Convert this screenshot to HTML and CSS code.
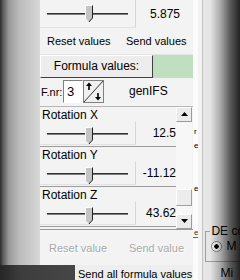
FILE: index.html
```html
<!DOCTYPE html>
<html lang="en">
  <head>
    <meta charset="UTF-8" />
    <title>Formula values</title>
    <link rel="stylesheet" href="styles.css">
  </head>
  <body>
    <div class="screen">
      <div class="leftcol">
        <div class="main">
          <div class="shade"></div>
          <div class="panel">
            <!-- top slider, half scrolled away -->
            <div class="row-top">
              <div class="slider tall">
                <div class="track"></div>
                <svg class="thumb" width="9" height="18" viewBox="0 0 9 18">
                  <path d="M0.5,0.5 H7.5 V13 L4,17 L0.5,13 Z" fill="#c4c4c4" />
                  <path d="M0.5,13 V0.5 H7.5" fill="none" stroke="#fff" />
                  <path d="M7.5,0.5 V13 L4,17" fill="none" stroke="#222" />
                </svg>
              </div>
              <span class="topval">5.875</span>
            </div>

            <div class="links">
              <span class="l1">Reset values</span>
              <span class="l2">Send values</span>
            </div>

            <div class="formula">
              <div class="fbutton">Formula values:</div>
              <div class="green"></div>
            </div>

            <div class="fnr">
              <span class="fnr-label">F.nr:</span>
              <span class="numbox">3</span>
              <svg class="spin" width="21" height="23" viewBox="0 0 21 23">
                <rect x="0.5" y="0.5" width="20" height="22" fill="#f0f0f0" stroke="#808080" />
                <path d="M1,22 L20,1" stroke="#333" />
                <path d="M6,10 V4" stroke="#000" stroke-width="1.6" />
                <path d="M3,6 L6,2.5 L9,6 Z" fill="#000" />
                <path d="M15,13 V19" stroke="#000" stroke-width="1.6" />
                <path d="M12,17 L15,20.5 L18,17 Z" fill="#000" />
              </svg>
              <span class="gen">genIFS</span>
            </div>

            <div class="scroll">
              <div class="rows">
                <div class="rot">
                  <div class="rot-label">Rotation X</div>
                  <div class="rot-line">
                    <div class="slider">
                      <div class="track"></div>
                      <svg class="thumb" width="9" height="18" viewBox="0 0 9 18">
                        <path d="M0.5,0.5 H7.5 V13 L4,17 L0.5,13 Z" fill="#c4c4c4" />
                        <path d="M0.5,13 V0.5 H7.5" fill="none" stroke="#fff" />
                        <path d="M7.5,0.5 V13 L4,17" fill="none" stroke="#222" />
                      </svg>
                    </div>
                    <span class="val">12.5</span>
                  </div>
                </div>
                <div class="rot">
                  <div class="rot-label">Rotation Y</div>
                  <div class="rot-line">
                    <div class="slider">
                      <div class="track"></div>
                      <svg class="thumb" width="9" height="18" viewBox="0 0 9 18">
                        <path d="M0.5,0.5 H7.5 V13 L4,17 L0.5,13 Z" fill="#c4c4c4" />
                        <path d="M0.5,13 V0.5 H7.5" fill="none" stroke="#fff" />
                        <path d="M7.5,0.5 V13 L4,17" fill="none" stroke="#222" />
                      </svg>
                    </div>
                    <span class="val">-11.12</span>
                  </div>
                </div>
                <div class="rot">
                  <div class="rot-label">Rotation Z</div>
                  <div class="rot-line">
                    <div class="slider">
                      <div class="track"></div>
                      <svg class="thumb" width="9" height="18" viewBox="0 0 9 18">
                        <path d="M0.5,0.5 H7.5 V13 L4,17 L0.5,13 Z" fill="#c4c4c4" />
                        <path d="M0.5,13 V0.5 H7.5" fill="none" stroke="#fff" />
                        <path d="M7.5,0.5 V13 L4,17" fill="none" stroke="#222" />
                      </svg>
                    </div>
                    <span class="val">43.62</span>
                  </div>
                </div>
              </div>
              <div class="sbar">
                <div class="sbtn">
                  <svg width="7" height="4" viewBox="0 0 7 4"><path d="M0,4 L3.5,0 L7,4 Z" fill="#000" /></svg>
                </div>
                <div class="strack"></div>
                <div class="sthumb"></div>
                <div class="strack short"></div>
                <div class="sbtn">
                  <svg width="7" height="4" viewBox="0 0 7 4"><path d="M0,0 L3.5,4 L7,0 Z" fill="#000" /></svg>
                </div>
              </div>
            </div>

            <div class="links off">
              <span class="l1">Reset value</span>
              <span class="l2">Send value</span>
            </div>
          </div>
        </div>
        <div class="footer">
          <div class="fdark"></div>
          <div class="fsend">Send all formula values</div>
        </div>
      </div>

      <div class="edge">
        <div class="blue"></div>
        <div class="gap">
          <span class="frag f1">r</span>
          <span class="frag f2">e</span>
          <span class="frag f3">e</span>
          <span class="frag f4">e</span>
        </div>
        <div class="black"></div>
        <div class="win">
          <div class="group">
            <div class="legend">DE co</div>
            <div class="radio"><span class="dot"></span>M</div>
          </div>
          <div class="mi">Mi</div>
        </div>
      </div>
    </div>
  </body>
</html>
```

FILE: styles.css
```css
html,
body {
  margin: 0;
  height: 100%;
}

body {
  width: 240px;
  height: 280px;
  overflow: hidden;
  font-family: "Liberation Sans", Arial, sans-serif;
  font-size: 11px;
  color: #000;
}

.screen {
  position: relative;
  display: flex;
  width: 240px;
  height: 280px;
}

/* dark vignette on the right, over the neighbour window */
.screen::after {
  content: "";
  position: absolute;
  top: 0;
  right: 0;
  width: 30px;
  height: 280px;
  background: linear-gradient(to right, rgba(0, 0, 0, 0) 0, rgba(0, 0, 0, 0.25) 10px, rgba(0, 0, 0, 0.6) 20px, rgba(0, 0, 0, 0.85) 30px);
  pointer-events: none;
}

.leftcol {
  display: flex;
  flex-direction: column;
  width: 193px;
}

.main {
  display: flex;
  height: 265px;
}

.shade {
  width: 40px;
  background: linear-gradient(to right, #2c2c2c 0, #5a5a5a 3px, #9a9a9a 9px, #bdbdbd 20px, #cfcfcf 34px, #d8d8d8 40px);
}

.panel {
  width: 153px;
  background: #f3f3f3;
  display: flex;
  flex-direction: column;
}

/* sliders */
.slider {
  position: relative;
  width: 96px;
  height: 23px;
  border-right: 1px solid #d6d6d6;
  border-bottom: 1px solid #e2e2e2;
  box-sizing: border-box;
}

.slider.tall {
  height: 28px;
}

.track {
  position: absolute;
  left: 7px;
  top: 11px;
  width: 81px;
  height: 0;
  border-top: 1px solid #303030;
  border-bottom: 1px solid #808080;
}

.slider.tall .track {
  top: 13px;
}

.thumb {
  position: absolute;
  left: 45px;
  top: 5px;
}

.row-top {
  display: flex;
  align-items: center;
  height: 28px;
}

.topval {
  padding-left: 14px;
  padding-bottom: 1px;
  font-size: 12px;
}

.links {
  display: flex;
  align-items: center;
  height: 27px;
  border-bottom: 1px solid #e4e4e4;
  box-sizing: border-box;
}

.links .l1 {
  width: 79px;
  padding-left: 7px;
}

.links.off {
  height: 35px;
  border-bottom: none;
  color: #a8a8a8;
  text-shadow: 1px 1px 0 #fff;
}

.links.off .l1 {
  width: 80px;
  padding-left: 9px;
}

.formula {
  display: flex;
  height: 23px;
}

.fbutton {
  width: 113px;
  box-sizing: border-box;
  border: 1px solid;
  border-color: #fff #404040 #404040 #fff;
  background: #ededed;
  text-align: center;
  line-height: 20px;
  font-size: 12px;
}

.green {
  flex: 1;
  background: #c0dfc0;
}

.fnr {
  display: flex;
  align-items: center;
  height: 29px;
  border-bottom: 1px solid #b8b8b8;
  box-sizing: border-box;
}

.fnr-label {
  width: 22px;
  padding-left: 1px;
}

.numbox {
  width: 20px;
  height: 23px;
  box-sizing: border-box;
  border: 1px solid;
  border-color: #808080 #fff #fff #808080;
  background: #fff;
  font-size: 13px;
  line-height: 21px;
  padding-left: 3px;
}

.gen {
  padding-left: 25px;
  padding-bottom: 2px;
  font-size: 12px;
}

/* scrolled block of rotations */
.scroll {
  display: flex;
  height: 124px;
  border-bottom: 1px solid #9a9a9a;
  box-sizing: border-box;
}

.rows {
  width: 136px;
  overflow: hidden;
}

.rot {
  height: 40px;
  border-bottom: 1px solid #9c9c9c;
  box-sizing: border-box;
}

.rot-label {
  height: 14px;
  padding: 1px 0 0 2px;
  line-height: 14px;
  font-size: 12px;
}

.rot-line {
  display: flex;
  align-items: center;
}

.val {
  width: 40px;
  text-align: right;
  white-space: nowrap;
  font-size: 12px;
  padding-bottom: 1px;
}

.sbar {
  width: 16px;
  display: flex;
  flex-direction: column;
  background: #f7f7f7;
}

.sbtn {
  height: 15px;
  box-sizing: border-box;
  border: 1px solid;
  border-color: #fff #9a9a9a #9a9a9a #fff;
  background: #ebebeb;
  display: flex;
  align-items: center;
  justify-content: center;
}

.strack {
  height: 67px;
}

.strack.short {
  height: 8px;
}

.sthumb {
  height: 17px;
  box-sizing: border-box;
  border: 1px solid;
  border-color: #fff #a0a0a0 #a0a0a0 #fff;
  background: #ececec;
}

.footer {
  display: flex;
  height: 15px;
}

.fdark {
  width: 75px;
  background: linear-gradient(to right, #262626 0, #3c3c3c 20px, #474747 75px);
}

.fsend {
  flex: 1;
  background: #eeeeee;
  padding: 1px 0 0 3px;
  font-size: 11px;
  line-height: 16px;
  white-space: nowrap;
}

/* neighbour window at the right */
.edge {
  display: flex;
  width: 47px;
  height: 280px;
}

.blue {
  width: 2px;
  background: #3aa6d8;
}

.gap {
  width: 6px;
  background: #fbfbfb;
  display: flex;
  flex-direction: column;
  font-size: 8px;
  line-height: 9px;
}

.frag {
  padding-left: 1px;
}

.f1 {
  margin-top: 127px;
}

.f2 {
  margin-top: 5px;
}

.f3 {
  margin-top: 34px;
}

.f4 {
  margin-top: 35px;
  color: #333;
  border-bottom: 1px solid #d03030;
}

.black {
  width: 1px;
  background: #222;
}

.win {
  flex: 1;
  background: #e6e6e6;
  border-left: 4px solid #f2f2f2;
  box-shadow: inset 1px 0 0 #c4c4c4;
  display: flex;
  flex-direction: column;
  font-size: 12px;
}

.group {
  margin: 231px 0 0 3px;
  height: 31px;
  border: 1px solid #a0a0a0;
  border-right: none;
  box-sizing: border-box;
}

.legend {
  margin: -8px 0 0 4px;
  padding: 0 1px;
  background: #e6e6e6;
  white-space: nowrap;
  width: max-content;
}

.radio {
  display: flex;
  align-items: center;
  gap: 4px;
  padding: 1px 0 0 5px;
}

.dot {
  width: 9px;
  height: 9px;
  border-radius: 50%;
  border: 1px solid #808080;
  background: radial-gradient(circle, #000 0, #000 2px, #fff 2.5px);
}

.mi {
  padding: 4px 0 0 18px;
}
```
